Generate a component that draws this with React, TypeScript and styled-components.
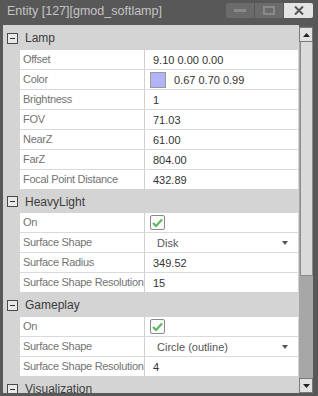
import React from 'react';
import styled, {createGlobalStyle} from 'styled-components';

const GlobalStyle = createGlobalStyle`
  html, body {
    margin: 0;
    padding: 0;
    background: #575757;
  }
`

const Window = styled.div`
  width: 318px;
  height: 396px;
  display: flex;
  flex-direction: column;
  background: #585858;
  font-family: "Liberation Sans", Arial, sans-serif;
  overflow: hidden;
`

const TitleBar = styled.div`
  height: 25px;
  display: flex;
  align-items: flex-start;
  padding: 0 5px 0 7px;
  box-sizing: border-box;
`

const Title = styled.div`
  flex: 1;
  color: #c4c4c4;
  font-size: 12.5px;
  line-height: 22px;
`

const TitleButtons = styled.div`
  display: flex;
  margin-top: 3px;
  gap: 1px;
`

const TitleButton = styled.div<{ $close?: boolean }>`
  width: ${p => p.$close ? 29 : 28}px;
  height: 15px;
  display: flex;
  align-items: center;
  justify-content: center;
  background: ${p => p.$close ? '#e4e4e4' : '#6b6b6b'};
  border-radius: ${p => p.$close ? '0 2px 2px 0' : '0'};
  &:first-child {
    border-radius: 2px 0 0 2px;
  }
`

const Body = styled.div`
  flex: 1;
  display: flex;
  padding: 0 5px 3px 3px;
  min-height: 0;
`

const Content = styled.div`
  flex: 1;
  background: #d4d4d4;
  overflow: hidden;
  padding-right: 1px;
`

const SectionHeader = styled.div<{ $h?: number }>`
  height: ${p => p.$h ?? 25}px;
  display: flex;
  align-items: center;
  padding-left: 4px;
  padding-top: 1px;
  box-sizing: border-box;
  gap: 7px;
  color: #3c3c3c;
  font-size: 12px;
`

const Toggle = styled.div`
  width: 9px;
  height: 9px;
  border: 1px solid #4a4a4a;
  background: #e8e8e8;
  display: flex;
  align-items: center;
  justify-content: center;
  &::after {
    content: '';
    width: 5px;
    height: 1px;
    background: #333;
  }
`

const Rows = styled.div`
  margin-left: 17px;
  background: #fff;
`

const Row = styled.div`
  display: grid;
  grid-template-columns: 125px 1fr;
  height: 20px;
  box-sizing: border-box;
  border-bottom: 1px solid #d9d9d9;
  &:last-child {
    border-bottom: none;
    height: 19px;
  }
`

const Name = styled.div`
  border-right: 1px solid #cfcfcf;
  padding-left: 3px;
  color: #737373;
  font-size: 11px;
  letter-spacing: -0.3px;
  line-height: 19px;
  white-space: nowrap;
  overflow: hidden;
`

const Value = styled.div<{ $pad?: number }>`
  display: flex;
  align-items: center;
  padding-left: ${p => p.$pad ?? 8}px;
  padding-right: 10px;
  color: #333;
  font-size: 11px;
  gap: 8px;
`

const Swatch = styled.div<{ $color: string }>`
  width: 14px;
  height: 14px;
  border: 1px solid #9a9a9a;
  background: ${p => p.$color};
`

const Check = styled.div`
  width: 13px;
  height: 13px;
  border: 1px solid #8a8a8a;
  border-radius: 2px;
  background: #fafafa;
  display: flex;
  align-items: center;
  justify-content: center;
  margin-left: -3px;
`

const Select = styled.div`
  flex: 1;
  display: flex;
  align-items: center;
  justify-content: space-between;
  color: #555;
`

const Caret = styled.div`
  width: 0;
  height: 0;
  border-left: 3.5px solid transparent;
  border-right: 3.5px solid transparent;
  border-top: 4px solid #555;
  margin-right: 0;
`

const ScrollBar = styled.div`
  width: 14px;
  display: flex;
  flex-direction: column;
  padding-top: 2px;
  background: #5c5c5c;
`

const ArrowBtn = styled.div`
  height: 15px;
  box-sizing: border-box;
  border: 1px solid #7a7a7a;
  background: #e2e2e2;
  display: flex;
  align-items: center;
  justify-content: center;
`

const Track = styled.div`
  flex: 1;
  display: flex;
  flex-direction: column;
  background: #a7a7a7;
  padding-left: 1px;
`

const Thumb = styled.div`
  height: 234px;
  box-sizing: border-box;
  border: 1px solid #8c8c8c;
  border-top: none;
  background: #dadada;
`

const Tri = ({up}: { up?: boolean }) => (
    <svg width="7" height="4" viewBox="0 0 7 4">
        <path d={up ? 'M0 4 L3.5 0 L7 4 Z' : 'M0 0 L3.5 4 L7 0 Z'} fill="#222"/>
    </svg>
)

const CheckMark = () => (
    <svg width="11" height="10" viewBox="0 0 11 10">
        <path d="M1 5 L4 8 L10 1.5" stroke="#5cb85c" strokeWidth="2.2" fill="none"/>
    </svg>
)

type Prop = { name: string, value?: string, kind?: 'text' | 'color' | 'check' | 'select', color?: string }

const sections: { title: string, h?: number, props: Prop[] }[] = [
    {
        title: 'Lamp', props: [
            {name: 'Offset', value: '9.10 0.00 0.00'},
            {name: 'Color', value: '0.67 0.70 0.99', kind: 'color', color: '#b1b5f7'},
            {name: 'Brightness', value: '1'},
            {name: 'FOV', value: '71.03'},
            {name: 'NearZ', value: '61.00'},
            {name: 'FarZ', value: '804.00'},
            {name: 'Focal Point Distance', value: '432.89'},
        ]
    },
    {
        title: 'HeavyLight', h: 24, props: [
            {name: 'On', kind: 'check'},
            {name: 'Surface Shape', value: 'Disk', kind: 'select'},
            {name: 'Surface Radius', value: '349.52'},
            {name: 'Surface Shape Resolution', value: '15'},
        ]
    },
    {
        title: 'Gameplay', props: [
            {name: 'On', kind: 'check'},
            {name: 'Surface Shape', value: 'Circle (outline)', kind: 'select'},
            {name: 'Surface Shape Resolution', value: '4'},
        ]
    },
]

const renderValue = (p: Prop) => {
    if (p.kind === 'color') {
        return <Value $pad={5}><Swatch $color={p.color!}/>{p.value}</Value>
    }
    if (p.kind === 'check') {
        return <Value><Check><CheckMark/></Check></Value>
    }
    if (p.kind === 'select') {
        return <Value $pad={12}><Select>{p.value}<Caret/></Select></Value>
    }
    return <Value>{p.value}</Value>
}

const App = () => {
    return (
        <>
            <GlobalStyle/>
            <Window>
                <TitleBar>
                    <Title>Entity [127][gmod_softlamp]</Title>
                    <TitleButtons>
                        <TitleButton>
                            <svg width="12" height="4"><rect x="0" y="0" width="12" height="3" fill="#8a8a8a"/></svg>
                        </TitleButton>
                        <TitleButton>
                            <svg width="12" height="9"><rect x="1" y="1" width="10" height="7" fill="none" stroke="#8a8a8a" strokeWidth="2"/></svg>
                        </TitleButton>
                        <TitleButton $close>
                            <svg width="10" height="9"><path d="M1 0.5 L9 8.5 M9 0.5 L1 8.5" stroke="#555" strokeWidth="2"/></svg>
                        </TitleButton>
                    </TitleButtons>
                </TitleBar>
                <Body>
                    <Content>
                        {sections.map(s => (
                            <section key={s.title}>
                                <SectionHeader $h={s.h}><Toggle/>{s.title}</SectionHeader>
                                <Rows>
                                    {s.props.map(p => (
                                        <Row key={p.name}>
                                            <Name>{p.name}</Name>
                                            {renderValue(p)}
                                        </Row>
                                    ))}
                                </Rows>
                            </section>
                        ))}
                        <SectionHeader><Toggle/>Visualization</SectionHeader>
                    </Content>
                    <ScrollBar>
                        <ArrowBtn><Tri up/></ArrowBtn>
                        <Track>
                            <Thumb/>
                        </Track>
                        <ArrowBtn><Tri/></ArrowBtn>
                    </ScrollBar>
                </Body>
            </Window>
        </>
    );
};

export default App;
